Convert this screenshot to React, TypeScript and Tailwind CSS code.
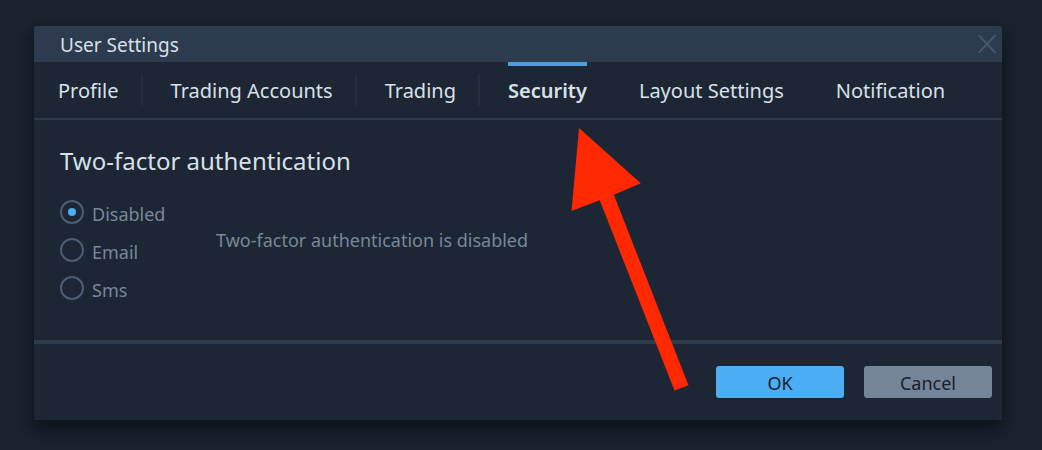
import { useState } from "react";

const tabs = [
  { name: "Profile", divider: true },
  { name: "Trading Accounts", divider: true },
  { name: "Trading", divider: true },
  { name: "Security", divider: false },
  { name: "Layout Settings", divider: false },
  { name: "Notification", divider: false },
];

const methods = ["Disabled", "Email", "Sms"];

function Tabs() {
  const [active, setActive] = useState("Security");
  return (
    <nav role="tablist" aria-label="Settings sections" className="flex h-[58px] border-b-2 border-[#2c3a4c] pl-6">
      {tabs.map(({ name, divider }) => (
        <div key={name} className="flex items-center">
          <button
            type="button"
            role="tab"
            aria-selected={active === name}
            className={
              "h-full border-t-4 pb-0.5 text-xl leading-6 whitespace-nowrap " +
              (active === name ? "border-[#4a9fdf] font-semibold" : "border-transparent")
            }
            onClick={() => setActive(name)}
          >
            {name}
          </button>
          <span className={"mr-7 ml-[22px] h-8 w-0.5 " + (divider ? "bg-[#222d3e]" : "bg-transparent")} />
        </div>
      ))}
    </nav>
  );
}

function TwoFactor() {
  const [method, setMethod] = useState("Disabled");
  return (
    <section className="h-[220px] px-[26px] pt-[25px]">
      <h2 className="text-2xl leading-8">Two-factor authentication</h2>
      <div className="mt-[23px] flex text-[#78879b]">
        <div role="radiogroup" aria-label="Two-factor authentication" className="flex w-[156px] flex-col gap-3.5">
          {methods.map((name) => (
            <label key={name} className="flex h-6 items-center gap-2 text-lg leading-5">
              <input
                type="radio"
                name="two-factor"
                checked={method === name}
                onChange={() => setMethod(name)}
                className="grid size-6 appearance-none place-items-center rounded-full border-2 border-[#4c5d75] before:size-2 before:rounded-full checked:before:bg-[#4badf3]"
              />
              <span className="pt-1">{name}</span>
            </label>
          ))}
        </div>
        <p className="pt-7 text-lg leading-6">Two-factor authentication is disabled</p>
      </div>
    </section>
  );
}

export default function App() {
  return (
    <main className="min-h-screen bg-[#1a242f] pt-[26px] pr-10 pb-[30px] pl-[34px] font-['Noto_Sans','Open_Sans',sans-serif] text-[#d8e0e8]">
      <div
        role="dialog"
        aria-labelledby="dialog-title"
        className="relative rounded-t-[3px] bg-[#1d2634] shadow-[0_8px_18px_2px_rgba(8,12,20,0.75)]"
      >
        <header className="flex h-9 items-center justify-between rounded-t-[3px] bg-[#2d3b4e] pr-1.5 pl-[26px]">
          <h1 id="dialog-title" className="pt-0.5 text-[19px] leading-6">User Settings</h1>
          <button type="button" aria-label="Close" className="text-[#46566a]">
            <svg className="size-[18px]" viewBox="0 0 18 18" fill="none" stroke="currentColor" strokeWidth="2">
              <path d="M0.5 0L17.5 18M17.5 0L0.5 18" />
            </svg>
          </button>
        </header>
        <Tabs />
        <TwoFactor />
        <footer className="flex h-20 justify-end gap-5 border-t-4 border-[#2c3a4c] pt-[22px] pr-2.5 text-lg leading-6 text-[#17202c]">
          <button type="button" className="h-8 w-32 rounded-[3px] bg-[#4badf3] pt-0.5">OK</button>
          <button type="button" className="h-8 w-32 rounded-[3px] bg-[#748499] pt-0.5">Cancel</button>
        </footer>
        <svg
          aria-hidden="true"
          className="pointer-events-none absolute top-[102px] left-[537px] h-[264px] w-[120px]"
          viewBox="0 0 120 264"
          fill="#ff2800"
        >
          <path d="M8 0L69.8 55.3L42.8 66.8L117.5 257.3L103.5 262.5L28.7 72.3L0.5 83Z" />
        </svg>
      </div>
    </main>
  );
}
